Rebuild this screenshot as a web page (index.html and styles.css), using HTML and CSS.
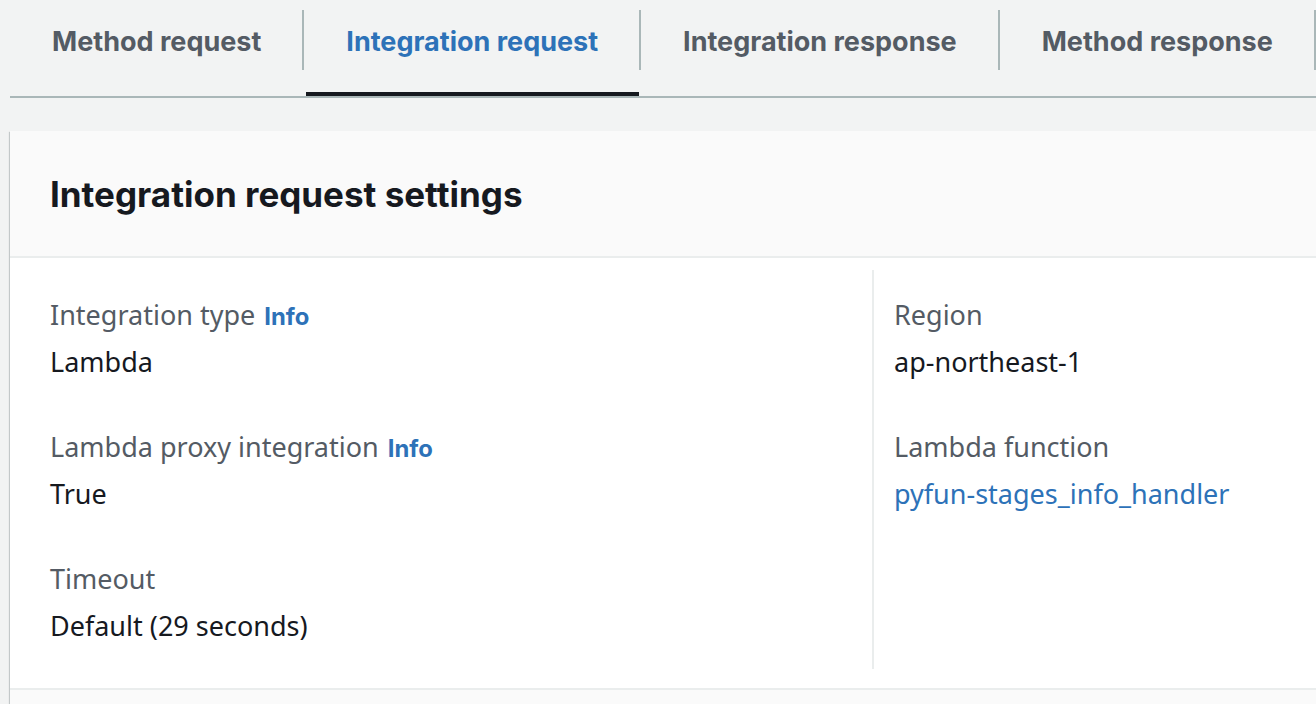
FILE: index.html
```html
<!DOCTYPE html>
<html lang="en">
<head>
<meta charset="utf-8">
<title>Integration request</title>
<link rel="stylesheet" href="styles.css">
</head>
<body>
<div class="page">
  <nav class="tabs">
    <div class="tab">Method request</div>
    <span class="sep"></span>
    <div class="tab active">Integration request</div>
    <span class="sep"></span>
    <div class="tab">Integration response</div>
    <span class="sep"></span>
    <div class="tab">Method response</div>
    <span class="sep"></span>
  </nav>

  <section class="card">
    <header class="card-header">
      <h2>Integration request settings</h2>
    </header>
    <div class="card-body">
      <div class="col col-left">
        <div class="field">
          <div class="label">Integration type <a class="info">Info</a></div>
          <div class="value">Lambda</div>
        </div>
        <div class="field">
          <div class="label">Lambda proxy integration <a class="info">Info</a></div>
          <div class="value">True</div>
        </div>
        <div class="field">
          <div class="label">Timeout</div>
          <div class="value">Default (29 seconds)</div>
        </div>
      </div>
      <div class="col col-right">
        <div class="field">
          <div class="label">Region</div>
          <div class="value">ap-northeast-1</div>
        </div>
        <div class="field">
          <div class="label">Lambda function</div>
          <div class="value"><a class="link">pyfun-stages_info_handler</a></div>
        </div>
      </div>
    </div>
    <div class="card-footer"></div>
  </section>
</div>
</body>
</html>
```
FILE: styles.css
```css
html, body {
  margin: 0;
  padding: 0;
  background: #f2f3f3;
  overflow: hidden;
}

.page {
  padding-left: 10px;
  font-family: "Noto Sans", "Open Sans", sans-serif;
  color: #16191f;
}

/* Tabs */
.tabs {
  display: flex;
  align-items: flex-start;
  height: 96px;
  border-bottom: 2px solid #aab7b8;
  margin-right: -20px;
}

.tab {
  height: 96px;
  box-sizing: border-box;
  padding: 0 41px 0 42px;
  font-family: "Inter", "Noto Sans", sans-serif;
  font-weight: 700;
  font-size: 27px;
  line-height: 83px;
  color: #545b64;
  white-space: nowrap;
}

.tab.active {
  color: #2d72b8;
  box-shadow: inset 2px 0 0 #f2f3f3, inset 0 -4px 0 #16191f;
}

.sep {
  flex: none;
  width: 2px;
  height: 60px;
  margin-top: 10px;
  background: #aab7b8;
}

/* Card */
.card {
  margin-top: 33px;
  margin-right: -40px;
  background: #ffffff;
  box-shadow: 0 1px 1px 0 rgba(0, 28, 36, 0.3),
              1px 1px 1px 0 rgba(0, 28, 36, 0.15),
              -1px 1px 1px 0 rgba(0, 28, 36, 0.15);
}

.card-header {
  background: #fafafa;
  height: 127px;
  box-sizing: border-box;
  padding: 0 40px;
  display: flex;
  align-items: center;
  border-bottom: 2px solid #eaeded;
}

.card-header h2 {
  margin: 0;
  font-family: "Inter", "Noto Sans", sans-serif;
  font-weight: 700;
  font-size: 35px;
  line-height: 44px;
  color: #16191f;
}

.card-body {
  display: grid;
  grid-template-columns: 862px 1fr;
  padding: 12px 0 19px;
  border-bottom: 2px solid #eaeded;
}

.col {
  display: flex;
  flex-direction: column;
  gap: 41px;
  padding: 23px 0 21px;
}

.col-left {
  padding-left: 40px;
}

.col-right {
  border-left: 2px solid #eaeded;
  padding-left: 20px;
}

.field {
  display: flex;
  flex-direction: column;
  gap: 3px;
}

.label {
  font-size: 27px;
  line-height: 44px;
  height: 44px;
  color: #545b64;
  white-space: nowrap;
}

.value {
  font-size: 27px;
  line-height: 44px;
  height: 44px;
  color: #16191f;
  white-space: nowrap;
}

.info {
  font-family: "Inter", "Noto Sans", sans-serif;
  font-weight: 700;
  font-size: 23.8px;
  line-height: 1;
  color: #2d72b8;
  margin-left: 2px;
}

.link {
  color: #2d72b8;
}

.card-footer {
  height: 40px;
  background: #fafafa;
}
```
